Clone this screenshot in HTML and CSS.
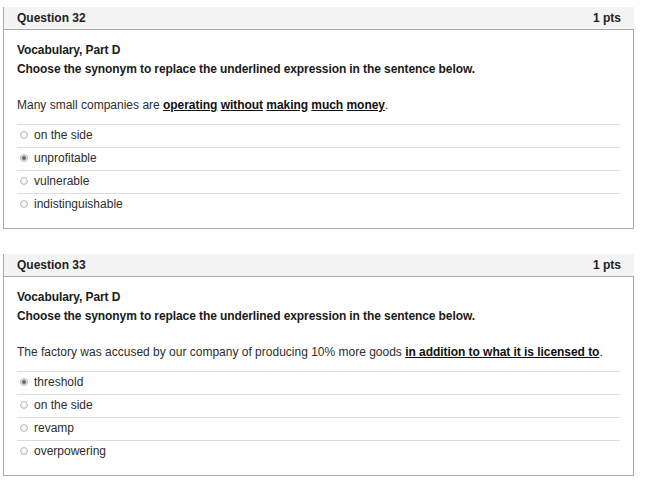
FILE: index.html
```html
<!DOCTYPE html>
<html>
<head>
<meta charset="utf-8">
<link rel="stylesheet" href="styles.css">
</head>
<body>
<div class="page">
  <div class="question">
    <div class="q-header"><span class="q-title">Question 32</span><span class="q-pts">1 pts</span></div>
    <div class="q-body">
      <div class="q-intro">
        <div class="bold">Vocabulary, Part D</div>
        <div class="bold">Choose the synonym to replace the underlined expression in the sentence below.</div>
      </div>
      <div class="q-sentence">Many small companies are <b class="ul">operating</b> <b class="ul">without</b> <b class="ul">making</b> <b class="ul">much</b> <b class="ul">money</b>.</div>
      <div class="answers">
        <div class="answer"><span class="radio"></span>on the side</div>
        <div class="answer"><span class="radio checked"></span>unprofitable</div>
        <div class="answer"><span class="radio"></span>vulnerable</div>
        <div class="answer"><span class="radio"></span>indistinguishable</div>
      </div>
    </div>
  </div>
  <div class="question">
    <div class="q-header"><span class="q-title">Question 33</span><span class="q-pts">1 pts</span></div>
    <div class="q-body">
      <div class="q-intro">
        <div class="bold">Vocabulary, Part D</div>
        <div class="bold">Choose the synonym to replace the underlined expression in the sentence below.</div>
      </div>
      <div class="q-sentence">The factory was accused by our company of producing 10% more goods <b class="ul">in addition to what it is licensed to</b>.</div>
      <div class="answers">
        <div class="answer"><span class="radio checked"></span>threshold</div>
        <div class="answer"><span class="radio"></span>on the side</div>
        <div class="answer"><span class="radio"></span>revamp</div>
        <div class="answer"><span class="radio"></span>overpowering</div>
      </div>
    </div>
  </div>
</div>
</body>
</html>
```
FILE: styles.css
```css
html, body {
  margin: 0;
  padding: 0;
  background: #fff;
}
body {
  font-family: "Liberation Sans", Arial, sans-serif;
  font-size: 12px;
  color: #2d2d2d;
}
.page {
  padding: 7px 0 0 3px;
}
.question {
  width: 629px;
  border-left: 1px solid #aaa;
  border-right: 1px solid #aaa;
  border-bottom: 1px solid #aaa;
  margin-bottom: 25px;
}
.q-header {
  display: flex;
  justify-content: space-between;
  background: #f4f4f4;
  height: 22px;
  line-height: 22px;
  padding: 0 13px;
  border-bottom: 1px solid #aaa;
  font-weight: bold;
  color: #222;
  margin-right: -1px;
}
.q-body {
  padding: 11px 13px 12px 13px;
}
.q-intro {
  line-height: 19px;
}
.bold {
  font-weight: bold;
  color: #1a1a1a;
  letter-spacing: -0.09px;
}
.q-sentence {
  line-height: 19px;
  margin-top: 17px;
  padding-bottom: 9px;
}
.ul {
  text-decoration: underline;
  color: #111;
  letter-spacing: -0.05px;
}
.answer {
  display: flex;
  align-items: center;
  line-height: 19px;
  border-top: 1px solid #ddd;
  padding-bottom: 2px;
  height: 20px;
}
.radio {
  display: inline-block;
  box-sizing: border-box;
  width: 8px;
  height: 8px;
  border-radius: 50%;
  border: 1px solid #bcbcbc;
  background: radial-gradient(circle at 50% 40%, #fff 0%, #eee 60%, #ddd 100%);
  margin: 0 6px 0 3px;
}
.radio.checked {
  background: radial-gradient(circle, #555 0, #777 1.6px, #e0e0e0 2.4px, #f0f0f0 100%);
}
```
